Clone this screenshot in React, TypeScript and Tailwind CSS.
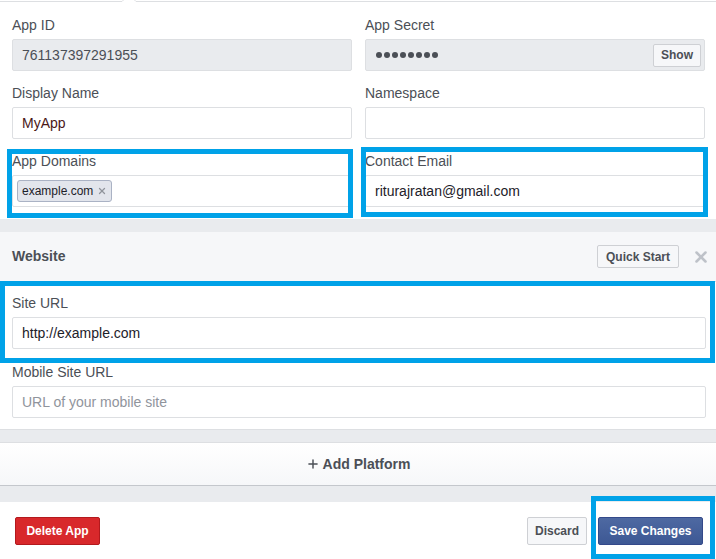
import { Plus, X } from 'lucide-react'

const font = { fontFamily: '"Liberation Sans", Arial, Helvetica, sans-serif' }

function Field({ label, children }: { label: string; children: React.ReactNode }) {
  return (
    <div className="flex flex-col">
      <label className="h-[18px] leading-[18px] text-[14px] text-[#4b4f56] mb-[5px]">{label}</label>
      {children}
    </div>
  )
}

function Box({ gray, tight, children, className = '' }: { gray?: boolean; tight?: boolean; children?: React.ReactNode; className?: string }) {
  return (
    <div className={`h-[32px] border border-[#dddfe2] rounded-[2px] flex items-center text-[14px] ${tight ? 'pl-[4px] pr-[3px]' : 'px-[9px]'} ${gray ? 'bg-[#e9ebee]' : 'bg-white'} ${className}`}>
      {children}
    </div>
  )
}

const btn = 'h-[23px] flex items-center text-[12px] font-bold text-[#4b4f56] bg-[#f6f7f9] border border-[#ced0d4] rounded-[2px]'

export default function App() {
  return (
    <div className="relative w-[716px] h-[559px] overflow-hidden bg-white" style={font}>
      {/* tab strip with caret */}
      <svg width="716" height="4" className="absolute top-0 left-0">
        <polyline points="0,1.5 122,1.5 126,-2.5" fill="none" stroke="#dddfe2" strokeWidth="1" />
        <polyline points="132,-2.5 136,1.5 716,1.5" fill="none" stroke="#dddfe2" strokeWidth="1" />
      </svg>

      {/* ── Basic settings ── */}
      <div className="grid grid-cols-[340px_340px] gap-x-[13px] gap-y-[13px] pl-[12px] pt-[16px] pb-[12px]">
        <Field label="App ID">
          <Box gray className="text-[#4b4f56]">761137397291955</Box>
        </Field>
        <Field label="App Secret">
          <Box gray tight className="justify-between">
            <div className="flex gap-[2px] pl-[6px]">
              {Array.from({ length: 8 }).map((_, i) => (
                <span key={i} className="w-[6px] h-[6px] rounded-full bg-[#4b4f56]" />
              ))}
            </div>
            <button className={`${btn} px-[7px]`}>Show</button>
          </Box>
        </Field>
        <Field label="Display Name">
          <Box className="text-[#4a1717]">MyApp</Box>
        </Field>
        <Field label="Namespace">
          <Box />
        </Field>
        <Field label="App Domains">
          <Box tight>
            <span className="h-[22px] flex items-center gap-[4px] px-[4px] text-[12px] text-[#1d2129] bg-[#e2e5ec] border border-[#aab2c4] rounded-[3px]">
              example.com
              <X size={10} strokeWidth={3} className="text-[#90949c]" />
            </span>
          </Box>
        </Field>
        <Field label="Contact Email">
          <Box className="text-[#1d2129]">riturajratan@gmail.com</Box>
        </Field>
      </div>

      <div className="h-[13px] bg-[#e9ebee]" />

      {/* ── Website platform ── */}
      <div className="border-b border-[#dddfe2]">
        <div className="h-[50px] bg-[#f6f7f9] border-b border-[#dddfe2] flex items-center pl-[12px] pr-[6px]">
          <span className="text-[14px] font-bold text-[#4b4f56]">Website</span>
          <button className={`${btn} ml-auto px-[8px]`}>Quick Start</button>
          <X size={18} strokeWidth={3.4} className="ml-[13px] text-[#bec2c9]" />
        </div>
        <div className="flex flex-col gap-[14px] pl-[12px] pr-[10px] pt-[12px] pb-[11px]">
          <Field label="Site URL">
            <Box className="text-[#1d2129]">http://example.com</Box>
          </Field>
          <Field label="Mobile Site URL">
            <Box className="text-[#90949c]">URL of your mobile site</Box>
          </Field>
        </div>
      </div>

      <div className="h-[12px] bg-[#e9ebee]" />

      <div className="h-[44px] border-t border-[#dddfe2] border-b border-b-[#c4c7cc] bg-gradient-to-b from-white to-[#f6f7f9] flex items-center justify-center gap-[3px] text-[14px] font-bold text-[#4b4f56]">
        <Plus size={14} strokeWidth={2.5} className="text-[#4b4f56]" />
        Add Platform
      </div>

      <div className="h-[16px] bg-[#e9ebee]" />

      {/* ── Footer ── */}
      <div className="flex items-center pt-[15px] pl-[15px] pr-[13px]">
        <button className="h-[28px] w-[85px] text-[12px] font-bold text-white bg-[#d8282b] border border-[#b3191d] rounded-[2px]">
          Delete App
        </button>
        <button className="ml-auto h-[28px] w-[60px] text-[12px] font-bold text-[#4b4f56] bg-[#f6f7f9] border border-[#ced0d4] rounded-[2px]">
          Discard
        </button>
        <button className="ml-[11px] h-[28px] w-[105px] text-[12px] font-bold text-white bg-gradient-to-b from-[#4e69a2] to-[#3d5894] border border-[#34498a] rounded-[2px]">
          Save Changes
        </button>
      </div>

      {/* annotation boxes */}
      <div className="absolute left-[7px] top-[149px] w-[346px] h-[69px] border-[5px] border-[#00a2e8]" />
      <div className="absolute left-[361px] top-[147px] w-[347px] h-[70px] border-[5px] border-[#00a2e8]" />
      <div className="absolute left-0 top-[281px] w-[715px] h-[82px] border-[5px] border-[#00a2e8]" />
      <div className="absolute left-[591px] top-[496px] w-[124px] h-[63px] border-[5px] border-[#00a2e8]" />
    </div>
  )
}
